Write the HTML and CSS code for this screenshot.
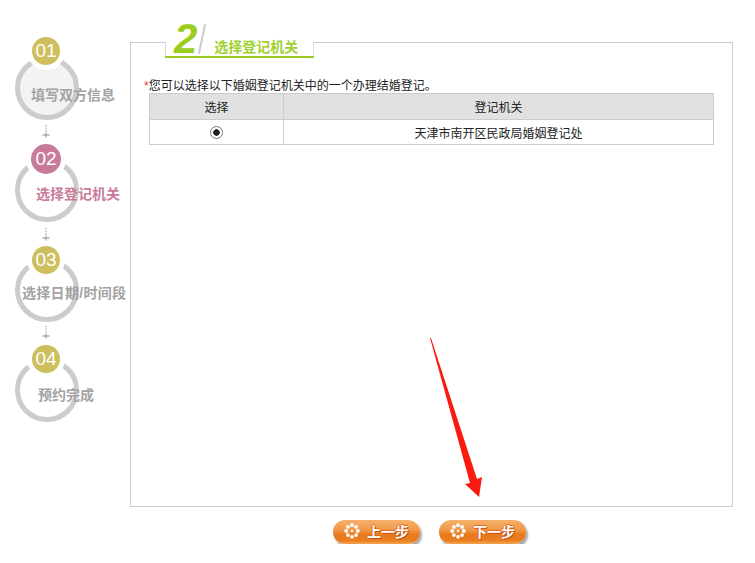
FILE: index.html
```html
<!DOCTYPE html>
<html lang="zh-CN">
<head>
  <meta charset="UTF-8" />
  <meta name="viewport" content="width=device-width, initial-scale=1.0" />
  <title>婚姻登记预约</title>
  <link rel="stylesheet" href="styles.css">
</head>
<body>
  <div class="page">
    <div class="steps">
      <div class="step step-1 step-filled">
        <svg class="ring" width="64" height="64" viewBox="0 0 64 64"><circle cx="32" cy="32" r="29.5" /></svg>
        <div class="badge">01</div>
        <div class="step-label">填写双方信息</div>
      </div>
      <svg class="link link-1" width="12" height="13" viewBox="0 0 12 13"><path d="M6 0v1.2M6 2.6v1.2M6 5.2v1.2M6 7.6v5M2.5 10h7" /></svg>

      <div class="step step-2 step-active">
        <svg class="ring" width="64" height="64" viewBox="0 0 64 64"><circle cx="32" cy="32" r="29.5" /></svg>
        <div class="badge">02</div>
        <div class="step-label">选择登记机关</div>
      </div>
      <svg class="link link-2" width="12" height="13" viewBox="0 0 12 13"><path d="M6 0v1.2M6 2.6v1.2M6 5.2v1.2M6 7.6v5M2.5 10h7" /></svg>

      <div class="step step-3">
        <svg class="ring" width="64" height="64" viewBox="0 0 64 64"><circle cx="32" cy="32" r="29.5" /></svg>
        <div class="badge">03</div>
        <div class="step-label">选择日期/时间段</div>
      </div>
      <svg class="link link-3" width="12" height="13" viewBox="0 0 12 13"><path d="M6 0v1.2M6 2.6v1.2M6 5.2v1.2M6 7.6v5M2.5 10h7" /></svg>

      <div class="step step-4">
        <svg class="ring" width="64" height="64" viewBox="0 0 64 64"><circle cx="32" cy="32" r="29.5" /></svg>
        <div class="badge">04</div>
        <div class="step-label">预约完成</div>
      </div>
    </div>

    <div class="content">
      <div class="panel">
        <div class="panel-title">
          <span class="title-num">2</span>
          <span class="title-slash"></span>
          <span class="title-text">选择登记机关</span>
        </div>

        <p class="note"><span class="star">*</span>您可以选择以下婚姻登记机关中的一个办理结婚登记。</p>

        <table>
          <thead>
            <tr>
              <th class="col-pick">选择</th>
              <th>登记机关</th>
            </tr>
          </thead>
          <tbody>
            <tr>
              <td><input type="radio" name="jg" checked></td>
              <td>天津市南开区民政局婚姻登记处</td>
            </tr>
          </tbody>
        </table>
      </div>

      <div class="btn-group">
        <button type="button" class="btn">
          <svg class="flower" width="16" height="16" viewBox="0 0 16 16"><circle cx="8" cy="8" r="1.2" /><circle cx="8" cy="2.2" r="1.9" /><circle cx="8" cy="13.8" r="1.9" /><circle cx="2.2" cy="8" r="1.9" /><circle cx="13.8" cy="8" r="1.9" /><circle cx="3.9" cy="3.9" r="1.9" /><circle cx="12.1" cy="3.9" r="1.9" /><circle cx="3.9" cy="12.1" r="1.9" /><circle cx="12.1" cy="12.1" r="1.9" /></svg>
          上一步
        </button>
        <button type="button" class="btn">
          <svg class="flower" width="16" height="16" viewBox="0 0 16 16"><circle cx="8" cy="8" r="1.2" /><circle cx="8" cy="2.2" r="1.9" /><circle cx="8" cy="13.8" r="1.9" /><circle cx="2.2" cy="8" r="1.9" /><circle cx="13.8" cy="8" r="1.9" /><circle cx="3.9" cy="3.9" r="1.9" /><circle cx="12.1" cy="3.9" r="1.9" /><circle cx="3.9" cy="12.1" r="1.9" /><circle cx="12.1" cy="12.1" r="1.9" /></svg>
          下一步
        </button>
      </div>
    </div>
  </div>

  <!-- annotation drawn over the page -->
  <svg class="arrow" width="755" height="563" viewBox="0 0 755 563">
    <path d="M430 338 L431 338 L477 479 L482 477 L479 497 L465 484 L470 483 Z" />
  </svg>
</body>
</html>
```

FILE: styles.css
```css
:root {
  --gray: #ccc;
  --green: #9ccc1c;
  --olive: #cdbf5e;
  --rose: #c97a9b;
  --cjk: "Liberation Sans", "Noto Sans CJK SC", sans-serif;
}

body {
  font-family: var(--cjk);
  font-size: 12px;
  color: #222;
  background: white;
  margin: 0;
}

.page {
  display: flex;
  padding-top: 37px;
}

/* left column with the four steps */
.steps {
  width: 130px;
  flex-shrink: 0;
}

.step {
  position: relative;
  width: 130px;
}

.step-1 { padding-top: 19px; }
.step-2 { padding-top: 15px; }
.step-3 { padding-top: 13px; }
.step-4 { padding-top: 14px; }

.ring {
  display: block;
  margin-left: 15px;
}

.ring circle {
  fill: none;
  stroke: #ccc;
  stroke-width: 5;
}

.step-filled .ring circle {
  fill: #f3f3f3;
}

.badge {
  position: absolute;
  top: 0;
  left: 32px;
  width: 28px;
  height: 28px;
  border-radius: 50%;
  background: var(--olive);
  box-shadow: 0 0 0 5px white;
  color: white;
  font-size: 19px;
  line-height: 28px;
  text-align: center;
}

.step-2 .badge {
  top: 1px;
  left: 31px;
  width: 30px;
  height: 30px;
  line-height: 30px;
  background: var(--rose);
}

.step-3 .badge {
  top: 1px;
}

.step-4 .badge {
  top: 1px;
}

.step-label {
  position: absolute;
  font-size: 14px;
  font-weight: bold;
  line-height: 20px;
  color: #a3a3a3;
  white-space: nowrap;
}

.step-active .step-label {
  color: var(--rose);
}

.step-1 .step-label { left: 31px; top: 48px; }
.step-2 .step-label { left: 36px; top: 41px; }
.step-3 .step-label { left: 22px; top: 38px; letter-spacing: 0.3px; }
.step-4 .step-label { left: 38px; top: 41px; }

.link {
  display: block;
  margin-left: 40px;
}

.link path {
  fill: none;
  stroke: #aaa;
  stroke-width: 1.4;
}

.link-1 { margin-top: 5px; margin-bottom: 5px; }
.link-2 { margin-top: 6px; margin-bottom: 4px; }
.link-3 { margin-top: 4px; margin-bottom: 5px; }

/* main panel */
.content {
  width: 603px;
  margin-top: 5px;
}

.panel {
  position: relative;
  box-sizing: border-box;
  height: 465px;
  border: 1px solid var(--gray);
  padding: 36px 18px 0;
}

.panel-title {
  position: absolute;
  top: -20px;
  left: 34px;
  box-sizing: border-box;
  width: 149px;
  height: 35px;
  border-bottom: 2px solid var(--green);
  display: flex;
  align-items: flex-end;
}

/* white patch that breaks the panel's top border */
.panel-title::before {
  content: "";
  position: absolute;
  left: 0;
  right: 0;
  top: 19px;
  bottom: 0;
  background: white;
  border-left: 1px solid #ddd;
  border-right: 1px solid #ddd;
}

.title-num,
.title-slash,
.title-text {
  position: relative;
}

.title-num {
  margin-left: 9px;
  font-family: "Liberation Sans", sans-serif;
  font-size: 42px;
  font-weight: bold;
  font-style: italic;
  line-height: 34px;
  color: var(--green);
}

.title-slash {
  width: 2px;
  height: 30px;
  margin: 0 0 2px 4px;
  background: #ccc;
  transform: rotate(12deg);
}

.title-text {
  margin-left: 11px;
  font-size: 14px;
  font-weight: bold;
  line-height: 18px;
  color: #a2d030;
}

.note {
  margin: 0 0 0 -5px;
  line-height: 14px;
}

.star {
  color: #e53935;
}

table {
  width: 565px;
  border-collapse: collapse;
  table-layout: fixed;
}

th, td {
  border: 1px solid var(--gray);
  height: 24px;
  padding: 0;
  text-align: center;
  font-weight: normal;
}

th {
  height: 25px;
  background: #e1e1e1;
}

.col-pick {
  width: 133px;
}

input[type="radio"] {
  appearance: none;
  display: block;
  box-sizing: border-box;
  width: 13px;
  height: 13px;
  margin: 0 auto;
  border: 1px solid #777;
  border-radius: 50%;
  background: radial-gradient(circle, #222 0 3px, white 3.5px);
}

.btn-group {
  display: flex;
  justify-content: center;
  gap: 19px;
  margin-top: 13px;
  padding-right: 4px;
}

.btn {
  display: flex;
  align-items: center;
  justify-content: center;
  gap: 7px;
  width: 87px;
  height: 24px;
  padding: 0 0 2px;
  border: none;
  border-radius: 12px;
  background: linear-gradient(#f7b06c, #f09a48 40%, #e8781c 62%, #ea7e20 85%, #f2a44c);
  box-shadow: 2px 3px 2px #aaa;
  color: white;
  font-family: var(--cjk);
  font-size: 14px;
  font-weight: bold;
  text-shadow: 1px 1px 0 #c84f10, -1px 0 0 #dc6a1c, 0 -1px 0 #dc6a1c;
  cursor: pointer;
}

.flower {
  fill: white;
}

.arrow {
  position: absolute;
  top: 0;
  left: 0;
  pointer-events: none;
}

.arrow path {
  fill: #fb1a10;
}
```
